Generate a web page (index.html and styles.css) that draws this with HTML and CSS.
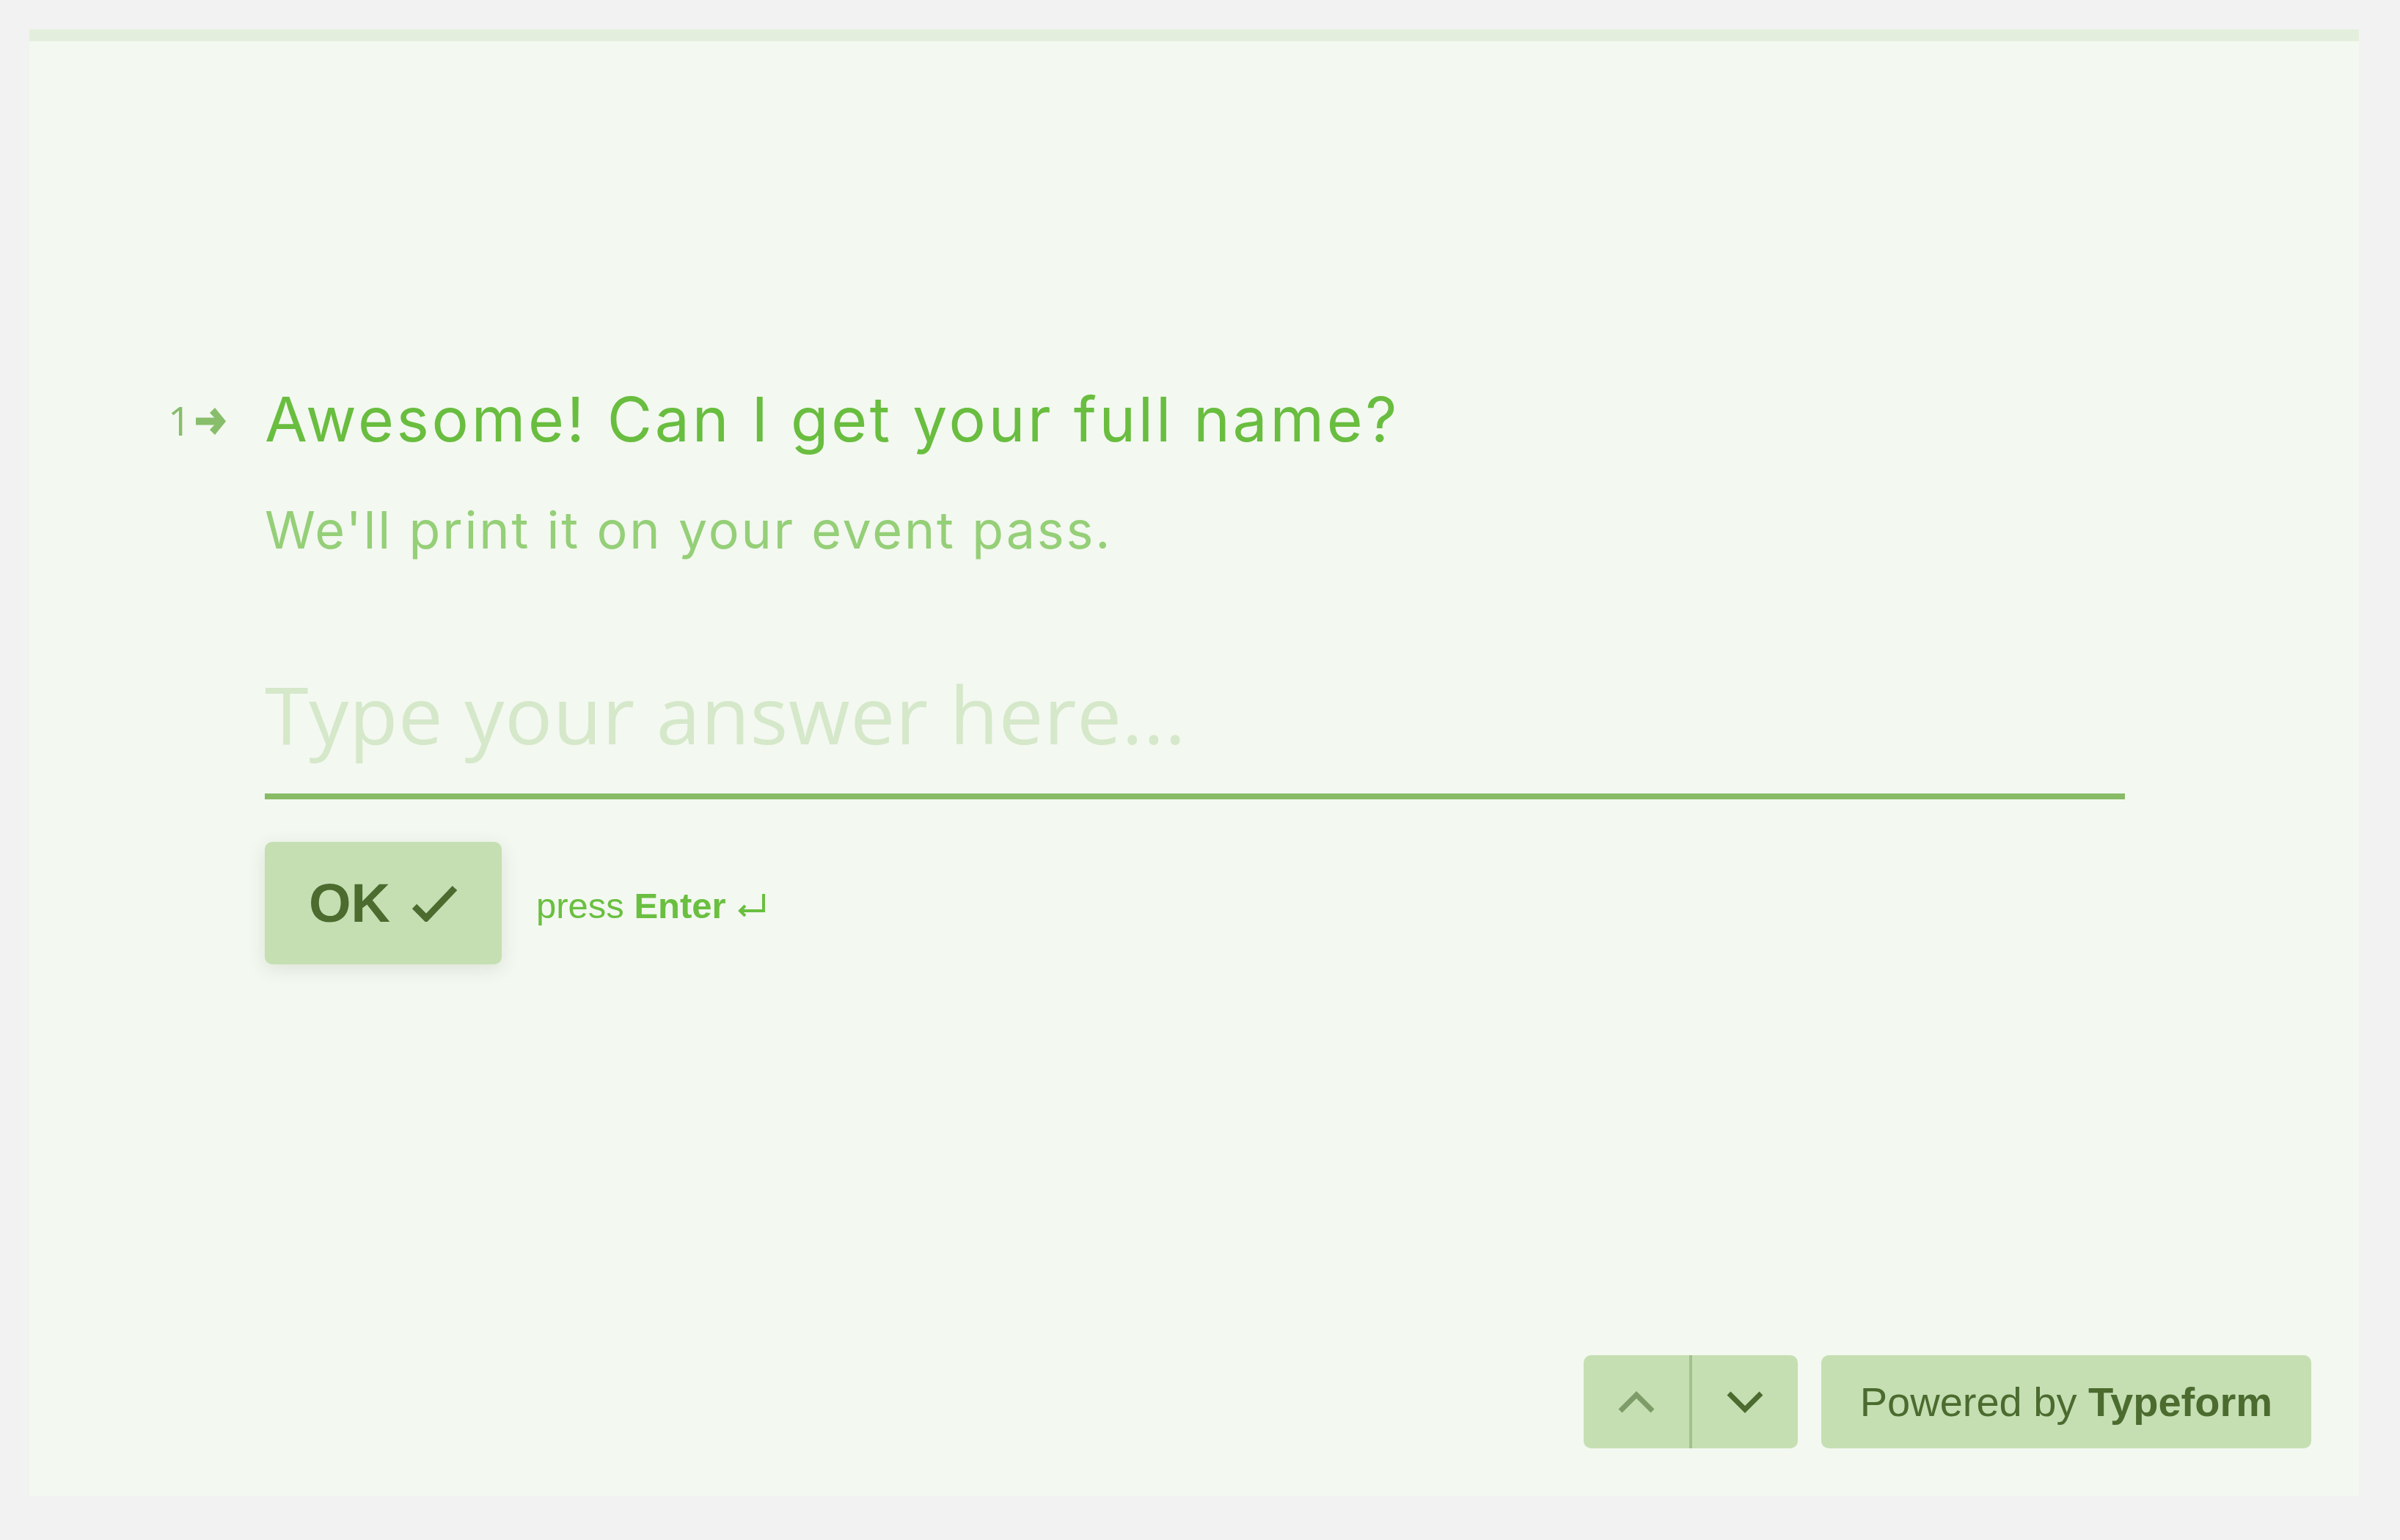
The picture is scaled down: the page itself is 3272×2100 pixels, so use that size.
FILE: index.html
```html
<!DOCTYPE html>
<html lang="en">
<head>
<meta charset="utf-8">
<title>Typeform – Question 1</title>
<link rel="stylesheet" href="styles.css">
</head>
<body>
<div class="frame">
  <div class="progress"></div>
  <main class="stage">
    <section class="question">
      <div class="q-num">
        <span class="num">1</span>
        <svg class="num-arrow" viewBox="0 0 41 37" width="41" height="37" aria-hidden="true">
          <rect x="0" y="13.5" width="32" height="10"/>
          <polygon points="19,7 26,0 41,18.5 26,37 19,30 30,18.5"/>
        </svg>
      </div>
      <div class="q-body">
        <h1 class="q-title">Awesome! Can I get your full name?</h1>
        <p class="q-desc">We'll print it on your event pass.</p>
        <input class="answer" type="text" placeholder="Type your answer here...">
        <div class="actions">
          <button class="ok" type="button">OK
            <svg class="check" viewBox="0 0 62 50" width="62" height="50" aria-hidden="true">
              <polyline points="3,29 19,45 58,4"/>
            </svg>
          </button>
          <span class="hint">press <b>Enter</b> <svg class="enter" viewBox="0 0 40 32" width="40" height="32" aria-hidden="true"><path d="M36 1 V24 H4"/><polyline points="11,17 4,24 11,31"/></svg></span>
        </div>
      </div>
    </section>
    <footer class="footer">
      <div class="nav">
        <button class="nav-btn nav-up" type="button" aria-label="Previous">
          <svg viewBox="0 0 52 32" width="52" height="32" aria-hidden="true"><polyline points="4,28 26,6 48,28"/></svg>
        </button>
        <button class="nav-btn nav-down" type="button" aria-label="Next">
          <svg viewBox="0 0 52 32" width="52" height="32" aria-hidden="true"><polyline points="4,4 26,26 48,4"/></svg>
        </button>
      </div>
      <a class="powered" href="#">Powered by <b>Typeform</b></a>
    </footer>
  </main>
</div>
</body>
</html>
```

FILE: styles.css
```css
* { box-sizing: border-box; }

html, body {
  margin: 0;
  padding: 0;
}

body {
  background: #f2f2f2;
  padding: 40px 56px 60px 40px;
  font-family: "Liberation Sans", Arial, sans-serif;
}

.frame {
  height: 2000px;
  background: #f3f8f0;
  display: flex;
  flex-direction: column;
}

.progress {
  height: 16px;
  background: #e3efdc;
  flex: none;
}

.stage {
  flex: 1;
  display: flex;
  flex-direction: column;
}

.question {
  display: flex;
  padding: 466px 0 0 189px;
}

.q-num {
  width: 132px;
  flex: none;
  display: flex;
  align-items: flex-start;
  gap: 7px;
  padding-top: 26px;
  color: #88bd6b;
}

.num {
  font-family: "Open Sans", sans-serif;
  font-size: 55px;
  line-height: 50px;
  height: 50px;
  letter-spacing: 0;
}

.num-arrow {
  fill: #88bd6b;
  margin-top: 8px;
}

.q-body {
  display: flex;
  flex-direction: column;
  align-items: flex-start;
}

.q-title {
  margin: 0;
  font-family: Inter, sans-serif;
  font-weight: 400;
  font-size: 84px;
  line-height: 1.2;
  letter-spacing: 3.7px;
  color: #69bd3f;
}

.q-desc {
  margin: 58px 0 0;
  font-family: Inter, sans-serif;
  font-weight: 400;
  font-size: 70px;
  line-height: 1.2;
  letter-spacing: 2.8px;
  color: #95cf78;
}

.answer {
  display: block;
  width: 2536px;
  height: 177px;
  margin: 148px 0 0;
  padding: 0 0 47px;
  border: 0;
  border-bottom: 8px solid #88bb66;
  background: transparent;
  font-family: "Open Sans", sans-serif;
  font-size: 108px;
  line-height: 130px;
  letter-spacing: 0.8px;
  color: #69bd3f;
  outline: none;
}

.answer::placeholder {
  color: #d5e8ca;
  opacity: 1;
}

.actions {
  display: flex;
  align-items: center;
  margin-top: 58px;
}

.ok {
  width: 323px;
  height: 167px;
  display: flex;
  align-items: center;
  justify-content: center;
  gap: 30px;
  padding: 0;
  border: 0;
  border-radius: 10px;
  background: #c5dfb3;
  box-shadow: 0 6px 24px rgba(60, 80, 50, 0.12);
  font-family: "Liberation Sans", Arial, sans-serif;
  font-weight: 700;
  font-size: 74px;
  color: #4b6b2f;
}

.check {
  fill: none;
  stroke: #4b6b2f;
  stroke-width: 9;
  stroke-linejoin: miter;
  margin-top: 2px;
}

.hint {
  display: block;
  margin: 8px 0 0 47px;
  font-family: "Liberation Sans", Arial, sans-serif;
  font-size: 49px;
  line-height: 56px;
  color: #6abf40;
  white-space: nowrap;
}

.hint b {
  font-weight: 700;
}

.enter {
  fill: none;
  stroke: #6abf40;
  stroke-width: 4;
  vertical-align: 2px;
  margin-left: 2px;
}

.footer {
  margin-top: auto;
  display: flex;
  justify-content: flex-end;
  gap: 32px;
  padding: 0 65px 65px 0;
}

.nav {
  display: flex;
  height: 127px;
  border-radius: 10px;
  overflow: hidden;
  background: #c5dfb3;
}

.nav-btn {
  width: 144px;
  height: 127px;
  display: flex;
  align-items: center;
  justify-content: center;
  padding: 0;
  border: 0;
  background: transparent;
}

.nav-up {
  width: 148px;
  border-right: 4px solid #a1c28b;
}

.nav-btn svg {
  fill: none;
  stroke-width: 7;
}

.nav-up svg { stroke: #7d9c68; }
.nav-down svg { stroke: #4b6b2f; }

.powered {
  height: 127px;
  display: flex;
  align-items: center;
  padding: 0 53px;
  border-radius: 10px;
  background: #c5dfb3;
  font-family: "Liberation Sans", Arial, sans-serif;
  font-size: 56px;
  color: #4b6b2f;
  text-decoration: none;
  white-space: pre;
}

.powered b {
  font-weight: 700;
}
```
